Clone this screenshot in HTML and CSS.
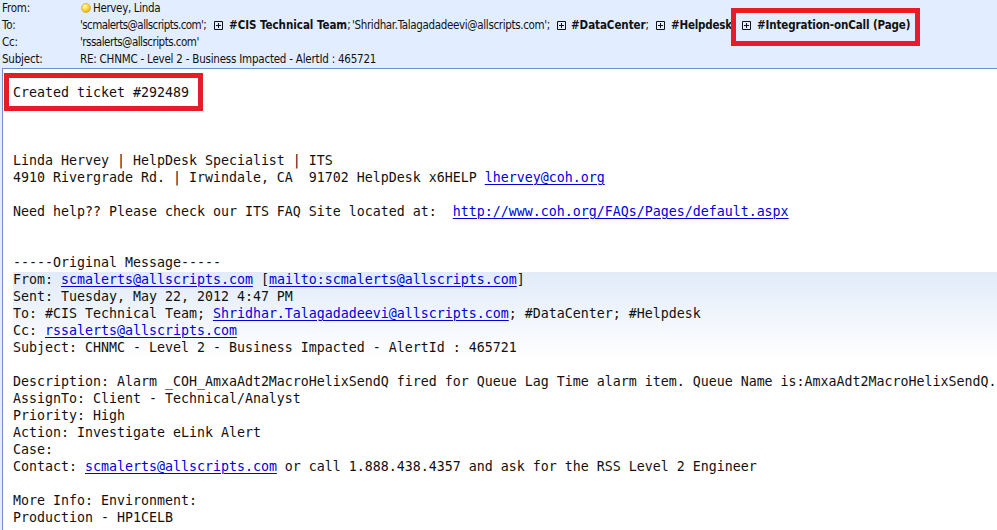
FILE: index.html
```html
<!DOCTYPE html>
<html lang="en">
<head>
<meta charset="utf-8">
<title>RE: CHNMC - Level 2 - Business Impacted - AlertId : 465721</title>
<link rel="stylesheet" href="styles.css">
</head>
<body>
<header class="headers">
  <div class="label">From:</div>
  <div class="value"><svg class="presence" viewBox="0 0 10 10"><defs><radialGradient id="ball" cx="35%" cy="30%" r="75%"><stop offset="0" stop-color="#fff7b0"/><stop offset=".5" stop-color="#ffdc42"/><stop offset="1" stop-color="#e6ac12"/></radialGradient></defs><circle cx="5" cy="5" r="4.5" fill="url(#ball)" stroke="#d7a934" stroke-width=".8"/></svg><span class="sender">Hervey, Linda</span></div>
  <div class="label">To:</div>
  <div class="value">
    <span class="to-scm">'scmalerts@allscripts.com';</span>
    <svg class="expand" viewBox="0 0 9 9"><path d="M.5.5h8v8h-8zM2 4.5h5M4.5 2v5"/></svg>
    <span class="to-cis"><b>#CIS Technical Team</b>;</span>
    <span class="to-shridhar">'Shridhar.Talagadadeevi@allscripts.com';</span>
    <svg class="expand" viewBox="0 0 9 9"><path d="M.5.5h8v8h-8zM2 4.5h5M4.5 2v5"/></svg>
    <span class="to-data"><b>#DataCenter</b>;</span>
    <svg class="expand" viewBox="0 0 9 9"><path d="M.5.5h8v8h-8zM2 4.5h5M4.5 2v5"/></svg>
    <span class="to-help"><b>#Helpdesk</b></span>
    <svg class="expand" viewBox="0 0 9 9"><path d="M.5.5h8v8h-8zM2 4.5h5M4.5 2v5"/></svg>
    <span class="to-page"><b>#Integration-onCall (Page)</b></span>
  </div>
  <div class="label">Cc:</div>
  <div class="value"><span class="cc">'rssalerts@allscripts.com'</span></div>
  <div class="label">Subject:</div>
  <div class="value"><span class="subject">RE: CHNMC - Level 2 - Business Impacted - AlertId : 465721</span></div>
</header>
<main class="message">
<pre class="reply">Created ticket #292489



Linda Hervey | HelpDesk Specialist | ITS
4910 Rivergrade Rd. | Irwindale, CA  91702 HelpDesk x6HELP <a>lhervey@coh.org</a>

Need help?? Please check our ITS FAQ Site located at:  <a>http://www.coh.org/FAQs/Pages/default.aspx</a>


-----Original Message-----</pre>
<pre class="original">From: <a>scmalerts@allscripts.com</a> [<a>mailto:scmalerts@allscripts.com</a>]
Sent: Tuesday, May 22, 2012 4:47 PM
To: #CIS Technical Team; <a>Shridhar.Talagadadeevi@allscripts.com</a>; #DataCenter; #Helpdesk
Cc: <a>rssalerts@allscripts.com</a>
Subject: CHNMC - Level 2 - Business Impacted - AlertId : 465721

Description: Alarm _COH_AmxaAdt2MacroHelixSendQ fired for Queue Lag Time alarm item. Queue Name is:AmxaAdt2MacroHelixSendQ.
AssignTo: Client - Technical/Analyst
Priority: High
Action: Investigate eLink Alert
Case:
Contact: <a>scmalerts@allscripts.com</a> or call 1.888.438.4357 and ask for the RSS Level 2 Engineer

More Info: Environment:
Production - HP1CELB</pre>
</main>
<div class="mark mark-page"></div>
<div class="mark mark-ticket"></div>
</body>
</html>
```
FILE: styles.css
```css
* { box-sizing: border-box; }
body {
  margin: 0;
  width: 997px;
  height: 530px;
  overflow: hidden;
  position: relative;
  background: #e2edff;
  color: #111;
}
.headers {
  display: grid;
  grid-template-columns: 78px 1fr;
  grid-auto-rows: 17px;
  height: 68px;
  padding-left: 2px;
  font: 11.5px/17px "DejaVu Sans Condensed", "DejaVu Sans", sans-serif;
  font-stretch: condensed;
  white-space: nowrap;
}
.label { letter-spacing: -0.2px; }
.value { display: flex; align-items: center; }
.value > span { flex: none; }
.presence { width: 10px; height: 10px; margin: -1px 2px 0 1px; flex: none; }
.expand { width: 9px; height: 9px; margin: -1px 6px 0 0; flex: none; fill: none; stroke: #111; stroke-width: 1; }
.sender { letter-spacing: -0.35px; }
.to-scm { width: 134px; letter-spacing: -0.57px; }
.to-cis { width: 123px; letter-spacing: -0.03px; }
.to-shridhar { width: 205px; letter-spacing: -0.34px; }
.to-data { width: 85px; margin-left: -1px; letter-spacing: -0.06px; }
.to-help { width: 71px; letter-spacing: -0.2px; }
.to-page { letter-spacing: -0.12px; }
.cc { letter-spacing: -0.51px; }
.subject { letter-spacing: -0.22px; }
.message {
  height: 470px;
  margin-left: 2px;
  padding: 15px 0 0 10px;
  border-left: 1px solid #6f90c8;
  border-top: 1px solid #6f90c8;
  background: #fff;
}
pre {
  margin: 0;
  font: 13.29px/17px "DejaVu Sans Mono", monospace;
}
.reply { height: 187px; }
.original { background: linear-gradient(#e1ebf9, #fff 86px) 0 1px no-repeat; }
a { color: #0000e0; text-decoration: underline; text-underline-offset: 2px; text-decoration-thickness: 1px; }
.mark { position: absolute; border: 5px solid #e81c27; }
.mark-page { left: 731px; top: 8px; width: 189px; height: 38px; }
.mark-ticket { left: 4px; top: 73px; width: 199px; height: 38px; }
```
